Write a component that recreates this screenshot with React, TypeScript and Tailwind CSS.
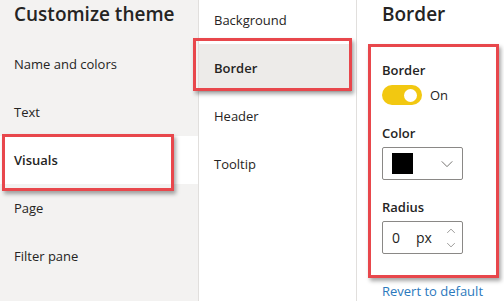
const leftItems = ['Name and colors', 'Text', 'Visuals', 'Page', 'Filter pane']
const midItems = ['Background', 'Border', 'Header', 'Tooltip']

function Chevron({ className, up = false }: { className?: string; up?: boolean }) {
  return (
    <svg viewBox="0 0 16 16" className={className} fill="none" stroke="#605e5c" strokeWidth="1">
      <path d={up ? 'M2 11 L8 5 L14 11' : 'M2 5 L8 11 L14 5'} />
    </svg>
  )
}

// annotation frame drawn over the UI
function RedBox({ className }: { className: string }) {
  return (
    <div
      className={`absolute border-[3px] border-[#e8474c] shadow-[2px_3px_4px_rgba(0,0,0,0.35)] pointer-events-none ${className}`}
    />
  )
}

export default function App() {
  return (
    <div
      className="relative flex h-[301px] w-[504px] overflow-hidden bg-white text-[#252423]"
      style={{ fontFamily: '"Segoe UI", "Open Sans", sans-serif' }}
    >
      {/* Left: theme sections */}
      <div className="flex w-[198px] shrink-0 flex-col bg-[#f3f2f1]">
        <div className="h-10 pl-[14px] text-[19px] font-semibold leading-[28px]">Customize theme</div>
        {leftItems.map((item) => (
          <div
            key={item}
            className={`flex h-12 items-center pl-[14px] pt-[2px] text-[13px] ${
              item === 'Visuals' ? 'bg-white font-semibold' : ''
            }`}
          >
            {item}
          </div>
        ))}
      </div>

      {/* Middle: visual sub-sections */}
      <div className="flex w-[159px] shrink-0 flex-col border-l border-r border-[#e1dfdd] -mt-1">
        {midItems.map((item) => (
          <div
            key={item}
            className={`mr-[5px] flex h-12 items-center pl-[15px] pt-[2px] text-[13px] ${
              item === 'Border' ? 'bg-[#edebe9] font-semibold' : ''
            }`}
          >
            {item}
          </div>
        ))}
      </div>

      {/* Right: border settings */}
      <div className="flex flex-1 flex-col pl-[25px]">
        <div className="text-[19px] font-semibold leading-[28px]">Border</div>
        <div className="mt-8 text-[13px] font-semibold leading-5">Border</div>
        <div className="mt-[5px] flex items-center gap-2">
          <div className="flex h-5 w-10 items-center justify-end rounded-full bg-[#f2c811] pr-[5px]">
            <div className="h-[13px] w-[13px] rounded-full bg-white" />
          </div>
          <span className="text-[13px] leading-5">On</span>
        </div>
        <div className="mt-[18px] text-[13px] font-semibold leading-5">Color</div>
        <div className="mt-[4px] flex h-[35px] w-[81px] items-center justify-between rounded-[2px] border border-[#8a8886] pl-[9px] pr-[8px]">
          <div className="h-[21px] w-[21px] bg-black" />
          <Chevron className="h-[14px] w-[14px]" />
        </div>
        <div className="mt-[17px] text-[13px] font-semibold leading-5">Radius</div>
        <div className="mt-[4px] flex h-[35px] w-[81px] items-center rounded-[2px] border border-[#8a8886] pl-[9px] pr-[6px] text-[14px]">
          <span className="w-6">0</span>
          <span>px</span>
          <div className="ml-auto flex flex-col gap-[4px]">
            <Chevron up className="h-[10px] w-[10px]" />
            <Chevron className="h-[10px] w-[10px]" />
          </div>
        </div>
        <div className="mt-[27px] text-[13px] leading-5 text-[#2b79bd]">Revert to default</div>
      </div>

      <RedBox className="left-[2px] top-[134px] h-[57px] w-[172px]" />
      <RedBox className="left-[193px] top-[38px] h-[53px] w-[159px]" />
      <RedBox className="left-[368px] top-[44px] h-[234px] w-[131px]" />
    </div>
  )
}
